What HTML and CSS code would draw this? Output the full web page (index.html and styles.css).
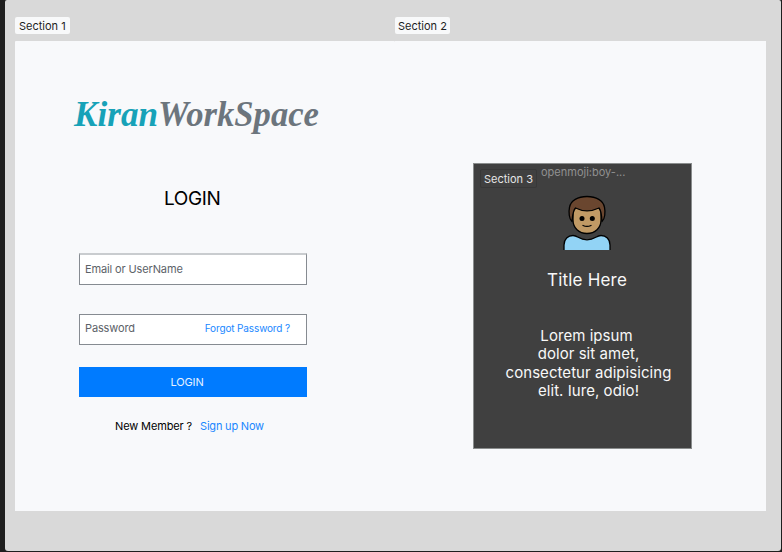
FILE: index.html
```
<!DOCTYPE html>
<html lang="en">
<head>
<meta charset="utf-8">
<title>KiranWorkSpace</title>
<link rel="stylesheet" href="styles.css">
</head>
<body>
<main class="board">
  <section class="section section-login">
    <span class="tag">Section 1</span>
    <div class="panel">
      <h1 class="logo"><svg width="256" height="50" viewBox="0 0 256 50"><text class="logo-first" x="5" y="35" textLength="84" lengthAdjust="spacingAndGlyphs">Kiran</text><text class="logo-last" x="89" y="35" textLength="161" lengthAdjust="spacingAndGlyphs">WorkSpace</text></svg></h1>
      <h2 class="heading">LOGIN</h2>
      <form class="form">
        <div class="field field-user"><span>Email or UserName</span></div>
        <div class="field field-pass"><span>Password</span><a class="forgot">Forgot Password ?</a></div>
        <div class="submit">LOGIN</div>
        <p class="signup"><span>New Member ?</span><a>Sign up Now</a></p>
      </form>
    </div>
  </section>
  <section class="section section-info">
    <span class="tag">Section 2</span>
    <div class="panel panel-info">
      <article class="card">
        <header class="card-top"><span class="tag tag-dark">Section 3</span><span class="layer">openmoji:boy-...</span></header>
        <svg class="boy" width="50" height="58" viewBox="0 0 50 58" stroke="#000" stroke-width="1.3" stroke-linecap="round" stroke-linejoin="round">
          <path fill="#92d3f5" stroke="none" d="M2 56V51C2 45 6 41.500 11 41.500C16 41.500 17 45.800 25 45.800S34 41.500 39 41.500C44 41.500 48 45 48 51V56Z"/>
          <path fill="none" stroke-linecap="butt" d="M2 56V51C2 45 6 41.500 11 41.500C16 41.500 17 45.800 25 45.800S34 41.500 39 41.500C44 41.500 48 45 48 51V56"/>
          <path fill="#c19a65" d="M11 17V26C11 34 17 39.500 25 39.500S39 34 39 26V17L34 10H16Z"/>
          <path fill="#6a462f" d="M10 27.500C7 25 6.500 18 7.500 13.500C8.500 6.500 16 2.500 25 2.500S41.500 6.500 42.500 13.500C43.500 18 43 25 40 27.500C39.700 22 39.500 17 37 14C29 17.800 21 17.800 13.500 14C10.700 17 10.500 22 10 27.500Z"/>
          <g stroke="none"><circle cx="20" cy="24.500" r="2.500"/><circle cx="30.300" cy="24.500" r="2.500"/></g>
          <path fill="none" d="M21 31.500Q25 33.300 29 31.500"/>
        </svg>
        <h3 class="card-title">Title Here</h3>
        <p class="card-text"><span class="line-one">Lorem ipsum</span><br>dolor sit amet,<br>consectetur adipisicing<br>elit. Iure, odio!</p>
      </article>
    </div>
  </section>
</main>
</body>
</html>
```
FILE: styles.css
```
* { box-sizing: border-box; }
body {
  margin: 0;
  width: 782px;
  height: 552px;
  padding: 0 1px 1px 5px;
  background: #1e1e1e;
  font-family: Inter, sans-serif;
  font-size: 11px;
  overflow: hidden;
}
h1, h2, h3, p { margin: 0; font-weight: 400; }
.board {
  display: flex;
  height: 551px;
  padding: 17px 15px 0 10px;
  background: #d9d9d9;
  border-radius: 2px 2px 3px 3px;
}
.section { display: flex; flex-direction: column; align-items: flex-start; }
.section-login { width: 379px; }
.section-info { width: 372px; }
.tag {
  height: 17px;
  padding: 0 4px;
  border-radius: 2px;
  background: #f8f9fa;
  color: #1e1e1e;
  line-height: 18px;
  white-space: nowrap;
}
.section-info > .tag { margin-left: 1px; padding: 0 3px; }
.panel {
  width: 100%;
  height: 470px;
  margin-top: 7px;
  background: #f8f9fb;
  border-radius: 1px 0 0 0;
}
.logo { height: 50px; margin: 50px 0 0 54px; }
.logo svg { display: block; }
.logo text {
  font-family: "Monotype Corsiva", "Liberation Serif", serif;
  font-size: 36px;
  font-style: italic;
  font-weight: 700;
}
.logo-first { fill: #17a2b8; }
.logo-last { fill: #6c757d; }
.heading {
  margin: 46px 0 0 149px;
  font-size: 19px;
  letter-spacing: -0.4px;
  line-height: 24px;
  color: #000;
}
.form { width: 228px; margin: 42px 0 0 64px; letter-spacing: -0.13px; }
.field {
  display: flex;
  justify-content: space-between;
  height: 31px;
  padding: 0 16px 0 5px;
  border: 1px solid #868b91;
  background: #fff;
  color: #5c6268;
  line-height: 26px;
}
.field-user { height: 32px; border-top: 2px solid #c9cccf; line-height: 29px; }
.field-pass { margin-top: 29px; }
.forgot { color: #1a87ff; font-size: 10px; line-height: 26px; }
.submit {
  height: 30px;
  margin-top: 22px;
  padding-right: 12px;
  background: #007bff;
  color: #e6f2ff;
  line-height: 30px;
  text-align: center;
}
.signup {
  display: flex;
  gap: 8px;
  margin: 22px 0 0 36px;
  line-height: 14px;
  color: #000;
}
.signup a { color: #1a87ff; letter-spacing: -0.2px; }
.panel-info { padding: 122px 0 0 79px; }
.card {
  display: flex;
  flex-direction: column;
  width: 219px;
  height: 286px;
  background: #404040;
  border: 1px solid #8a8d8d;
  color: #f8f8f8;
}
.card-top { display: flex; gap: 4px; height: 28px; padding: 5px 0 0 6px; }
.tag-dark {
  height: 19px;
  padding: 0 3px;
  border: 1px solid #383838;
  background: #404040;
  color: #e6e6e6;
}
.layer { color: #919191; line-height: 14px; margin-top: -4px; }
.boy { display: block; margin: 2px 0 0 88px; }
.card-title {
  margin: 17px 0 0 73px;
  font-size: 17px;
  letter-spacing: 0.2px;
  line-height: 22px;
}
.card-text {
  margin: 36px 0 0 20.5px;
  width: 188px;
  font-size: 15px;
  letter-spacing: 0.05px;
  line-height: 18.4px;
  text-align: center;
}
.line-one { margin-right: 4px; }
```
